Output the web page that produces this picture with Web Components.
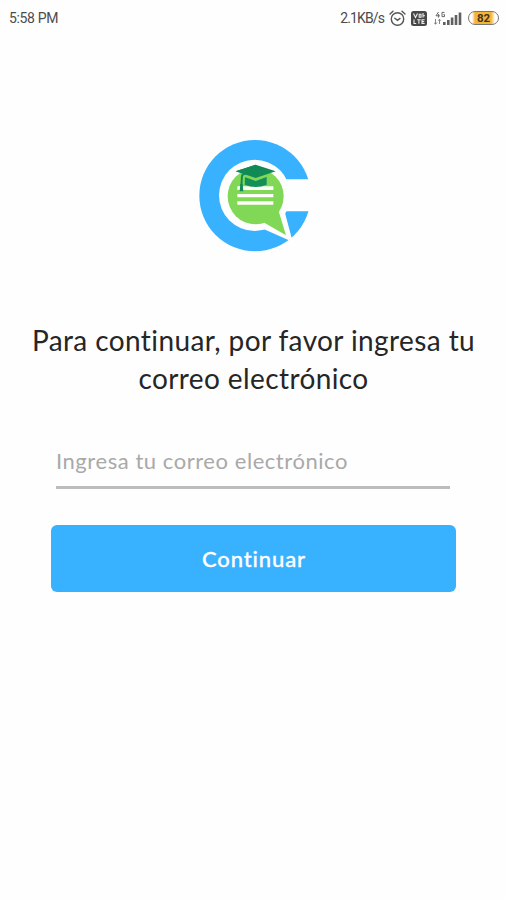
<!DOCTYPE html>
<html lang="es">
<head>
<meta charset="utf-8">
<meta name="viewport" content="width=device-width, initial-scale=1">
<title>Continuar</title>
<style>
    body {
        margin: 0;
        background: #fefefe;
        font-family: Lato, "Open Sans", sans-serif;
    }
</style>
</head>
<body>
<login-screen>
    <status-bar slot="status" time="5:58 PM" speed="2.1KB/s" battery="82"></status-bar>
    <app-logo></app-logo>
    <page-heading>Para continuar, por favor ingresa tu<br>correo electrónico</page-heading>
    <text-field>Ingresa tu correo electrónico</text-field>
    <primary-button>Continuar</primary-button>
</login-screen>

<script>
class LoginScreen extends HTMLElement {
    constructor() {
        super();
        this.attachShadow({ mode: "open" });
        this.shadowRoot.innerHTML = `
            <style>
                :host {
                    display: flex;
                    flex-direction: column;
                    height: 900px;
                    overflow: hidden;
                }

                main {
                    display: flex;
                    flex-direction: column;
                    align-items: center;
                    padding-top: 94px;
                }
            </style>
            <slot name="status"></slot>
            <main><slot></slot></main>
        `;
    }
}

class StatusBar extends HTMLElement {
    constructor() {
        super();
        this.attachShadow({ mode: "open" });
    }

    connectedCallback() {
        this.shadowRoot.innerHTML = `
            <style>
                :host {
                    display: flex;
                    justify-content: space-between;
                    align-items: center;
                    box-sizing: border-box;
                    height: 36px;
                    padding: 0 7px 0 9px;
                    font: 14px/36px Roboto, sans-serif;
                    color: #4c4c4c;
                }

                .time {
                    letter-spacing: -0.35px;
                }

                .right {
                    display: flex;
                    align-items: center;
                    height: 36px;
                }

                .speed {
                    letter-spacing: -0.9px;
                }

                svg {
                    display: block;
                    flex: none;
                }

                .alarm {
                    margin-left: 5px;
                }

                .volte {
                    margin-left: 5px;
                }

                .signal {
                    margin-left: 7px;
                }

                .battery {
                    display: flex;
                    align-items: center;
                    justify-content: center;
                    box-sizing: border-box;
                    width: 31px;
                    height: 14px;
                    margin-left: 6px;
                    border: 1.5px solid #777;
                    border-radius: 7px;
                    background: linear-gradient(90deg, #fff 3px, #f7b336 6px, #f7b336 22px, #fff 26px);
                    font: bold 11.5px/12px Roboto, sans-serif;
                    color: #3f351e;
                }
            </style>
            <span class="time">${this.getAttribute("time")}</span>
            <div class="right">
                <span class="speed">${this.getAttribute("speed")}</span>
                <svg class="alarm" width="17" height="17" viewBox="0 0 17 17" fill="none" stroke="#555" stroke-width="1.4" stroke-linecap="round">
                    <circle cx="8.5" cy="9" r="6.2"/>
                    <path d="M1 4 4 1.3M16 4 13 1.3M5.8 8.2 8.5 10.3 11 8.4"/>
                </svg>
                <svg class="volte" width="16" height="15" viewBox="0 0 16 15">
                    <rect width="16" height="15" rx="2.5" fill="#484848"/>
                    <path d="M2.5 2.5 4.5 6.5 6.5 2.5M8.2 3.2v3h1.8v-3zM12 2v4.6M12 4.8h2M3 8.5v4h2.2M6.2 8.7h3.4M7.9 8.7v4M13.6 8.7h-2.6v3.8h2.6M11 10.6h2.2" fill="none" stroke="#eee" stroke-width="1.1"/>
                </svg>
                <svg class="signal" width="28" height="15" viewBox="0 0 28 15">
                    <path d="M4.5 1 2 4.8h3.8M4.6 3v3.6M10.5 1.4H8v4.2h2.5V3.6H9.4" fill="none" stroke="#666" stroke-width="1"/>
                    <path d="M1.5 8v5M0 11.5 1.5 13.3 3 11.5M5.5 13V8M4.2 9.7 5.5 8.2 6.8 9.7" fill="none" stroke="#777" stroke-width="0.9"/>
                    <path d="M9 11h2.6v3H9zM13 9h2.6v5H13zM16.8 6.5h2.6V14h-2.6zM20.7 4h2.6v10h-2.6zM24.7 1.5h2.6V14h-2.6z" fill="#606060"/>
                </svg>
                <span class="battery">${this.getAttribute("battery")}</span>
            </div>
        `;
    }
}

class AppLogo extends HTMLElement {
    constructor() {
        super();
        this.attachShadow({ mode: "open" });
        this.shadowRoot.innerHTML = `
            <style>
                :host {
                    display: block;
                    width: 135px;
                    height: 130px;
                    margin-right: 1px;
                }

                svg {
                    display: block;
                }
            </style>
            <svg width="135" height="130" viewBox="0 0 405 390" role="img">
                <!-- letter ring with its opening on the right -->
                <circle cx="210" cy="197" r="167" fill="#38b1fe"/>
                <path d="M280 148H405V244H280z" fill="#fefefe"/>
                <circle cx="209" cy="196" r="107" fill="#fefefe"/>
                <path d="M234 296 310 330 321 328 297 238 250 230z" fill="#fefefe"/>
                <!-- speech bubble -->
                <circle cx="212" cy="199" r="84" fill="#80d856"/>
                <path d="M238 278 303 316 281 244 250 235z" fill="#80d856"/>
                <path d="M157 169h108v11H157zM157 192h108v10H157zM157 214h108v10H157z" fill="#fbfff8"/>
                <!-- graduation cap -->
                <path d="M179 141v23q33 14 66 0v-23l-33 12z" fill="#119059"/>
                <path d="M152 124 212 104 272 124 212 144z" fill="#118a55"/>
                <path d="M178 134 173 142 171 166" fill="none" stroke="#80d856" stroke-width="13"/>
                <path d="M152 124 212 104 212 128 180 133z" fill="#118a55"/>
                <path d="M200 126Q174 130 171 137L169 168" fill="none" stroke="#118a55" stroke-width="6"/>
                <path d="M166 162h7l2 22H164z" fill="#118a55"/>
            </svg>
        `;
    }
}

class PageHeading extends HTMLElement {
    constructor() {
        super();
        this.attachShadow({ mode: "open" });
        this.shadowRoot.innerHTML = `
            <style>
                :host {
                    display: block;
                    margin-top: 61px;
                }

                h1 {
                    margin: 0;
                    padding-left: 1px;
                    font-size: 28px;
                    font-weight: 400;
                    line-height: 38px;
                    letter-spacing: 0.4px;
                    text-align: center;
                    white-space: nowrap;
                    color: #262626;
                }
            </style>
            <h1><slot></slot></h1>
        `;
    }
}

class TextField extends HTMLElement {
    constructor() {
        super();
        this.attachShadow({ mode: "open" });
        this.shadowRoot.innerHTML = `
            <style>
                :host {
                    display: block;
                    box-sizing: border-box;
                    width: 394px;
                    height: 52px;
                    margin-top: 40px;
                    border-bottom: 3px solid #bdbdbd;
                    font-size: 22px;
                    line-height: 48px;
                    letter-spacing: 0.55px;
                    white-space: nowrap;
                    color: #a9a9a9;
                }
            </style>
            <slot></slot>
        `;
    }
}

class PrimaryButton extends HTMLElement {
    constructor() {
        super();
        this.attachShadow({ mode: "open" });
        this.shadowRoot.innerHTML = `
            <style>
                :host {
                    display: block;
                    margin-top: 36px;
                }

                button {
                    display: block;
                    width: 405px;
                    height: 67px;
                    padding: 0 0 0 2px;
                    border: 0;
                    border-radius: 6px;
                    background: #38b2ff;
                    font: 500 22px/67px Lato, sans-serif;
                    letter-spacing: 0.9px;
                    -webkit-text-stroke: 0.3px #fff;
                    color: #fff;
                }
            </style>
            <button type="button"><slot></slot></button>
        `;
    }
}

customElements.define("login-screen", LoginScreen);
customElements.define("status-bar", StatusBar);
customElements.define("app-logo", AppLogo);
customElements.define("page-heading", PageHeading);
customElements.define("text-field", TextField);
customElements.define("primary-button", PrimaryButton);
</script>
</body>
</html>
